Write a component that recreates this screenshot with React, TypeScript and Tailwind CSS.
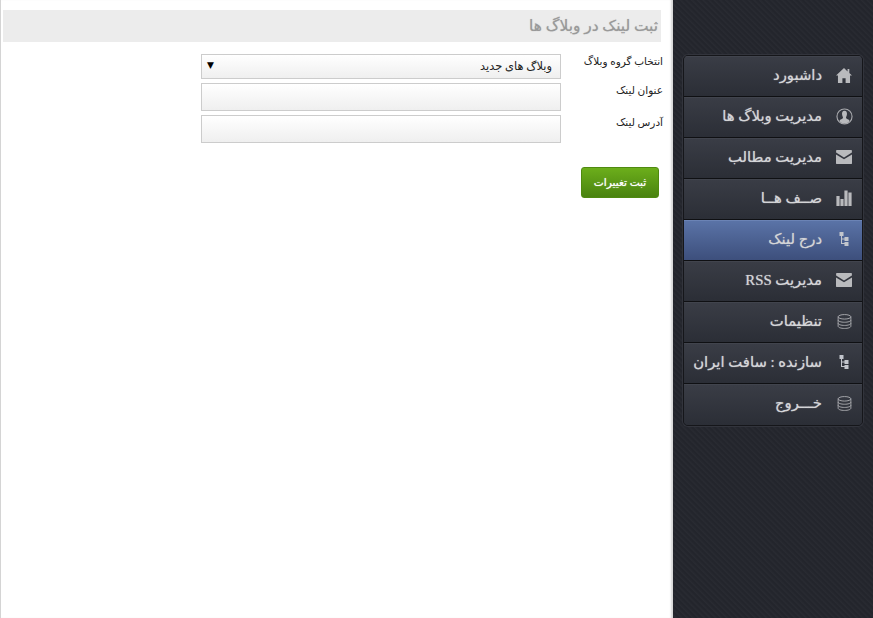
import React from "react";

const HomeIcon = () => (
  <svg width="16" height="15" viewBox="0 0 18 16" fill="#b9babd" preserveAspectRatio="none">
    <path d="M9 0 L13 3.6 V1 H15 V5.4 L18 8 H15.8 V16 H10.8 V11 H7.2 V16 H2.2 V8 H0 Z" />
  </svg>
);

const UserIcon = () => (
  <svg width="17" height="17" viewBox="0 0 18 18">
    <circle cx="9" cy="9" r="8" fill="none" stroke="#a9aaae" strokeWidth="1.2" />
    <path
      d="M9 2.8 C11 2.8 11.8 4.4 11.6 6.6 C11.5 8 11 9 10.6 9.8 C10.5 11 11.4 11.6 14 12.8 L14.2 14 C13 15.6 11 16.4 9 16.4 C7 16.4 5 15.6 3.8 14 L4 12.8 C6.6 11.6 7.5 11 7.4 9.8 C7 9 6.5 8 6.4 6.6 C6.2 4.4 7 2.8 9 2.8 Z"
      fill="#b9babd"
    />
  </svg>
);

const MailIcon = () => (
  <svg width="16" height="14" viewBox="0 0 17 14" fill="#b9babd" preserveAspectRatio="none">
    <path d="M0.5 0 H16.5 L16.9 0.5 V2.6 L8.5 7.4 L0.1 2.6 V0.5 Z" />
    <path d="M0 4.4 L8.5 9.2 L17 4.4 V13.4 L16.5 14 H0.5 L0 13.4 Z" />
  </svg>
);

const BarsIcon = () => (
  <svg width="16" height="16" viewBox="0 0 16 16" fill="#b9babd">
    <rect x="0.4" y="6" width="3.2" height="10" />
    <rect x="4.4" y="9" width="3.2" height="7" />
    <rect x="8.4" y="0.5" width="3.2" height="15.5" />
    <rect x="12.4" y="2.5" width="3.2" height="13.5" />
  </svg>
);

const TreeIcon = () => (
  <svg width="10" height="14" viewBox="0 0 10 14" fill="#c2c5cc">
    <rect x="0.5" y="0" width="4" height="4" />
    <rect x="2" y="4" width="1" height="8" />
    <rect x="2" y="6.5" width="4" height="1" />
    <rect x="2" y="11" width="4" height="1" />
    <rect x="5.5" y="5" width="4" height="4" />
    <rect x="5.5" y="10" width="4" height="4" />
  </svg>
);

const DbIcon = () => (
  <svg width="15" height="15" viewBox="0 0 16 16" fill="none" stroke="#a9aaae" strokeWidth="1">
    <ellipse cx="8" cy="3" rx="6.8" ry="2.4" />
    <path d="M1.2 3 V13 C1.2 14.4 4.2 15.4 8 15.4 C11.8 15.4 14.8 14.4 14.8 13 V3" />
    <path d="M1.2 6.4 C1.2 7.8 4.2 8.8 8 8.8 C11.8 8.8 14.8 7.8 14.8 6.4" />
    <path d="M1.2 9.8 C1.2 11.2 4.2 12.2 8 12.2 C11.8 12.2 14.8 11.2 14.8 9.8" />
  </svg>
);

const menu = [
  { label: "داشبورد", icon: <HomeIcon /> },
  { label: "مدیریت وبلاگ ها", icon: <UserIcon /> },
  { label: "مدیریت مطالب", icon: <MailIcon /> },
  { label: "صــف هــا", icon: <BarsIcon /> },
  { label: "درج لینک", icon: <TreeIcon />, active: true },
  { label: "مدیریت RSS", icon: <MailIcon /> },
  { label: "تنظیمات", icon: <DbIcon /> },
  { label: "سازنده : سافت ایران", icon: <TreeIcon /> },
  { label: "خـــروج", icon: <DbIcon /> },
];

const fieldClass =
  "block w-[360px] border border-[#cccccc] bg-gradient-to-b from-white to-[#efefef] outline-none";

export default function App() {
  return (
    <div
      dir="rtl"
      className="flex h-[618px] w-[873px] overflow-hidden bg-white font-['Liberation_Serif','DejaVu_Sans',sans-serif]"
    >
      {/* Sidebar */}
      <aside className="h-full w-[200px] shrink-0 bg-[#24262e] bg-[repeating-linear-gradient(45deg,#23252c_0px,#23252c_1px,#292b32_2px,#23252c_4px)] pt-[55px] pr-[10px] pl-[10px]">
        <nav className="overflow-hidden rounded-[5px] border border-[#15161a] shadow-[0_0_0_1px_#32343c]">
          {menu.map((item, i) => (
            <a
              key={i}
              className={
                "flex h-[41px] items-center border-b border-[#0f1013] pb-[2px] last:border-b-0 " +
                (item.active
                  ? "bg-gradient-to-b from-[#5b74a8] to-[#3d4f7c] shadow-[inset_0_1px_0_#6b83b5]"
                  : "bg-gradient-to-b from-[#3a3d46] to-[#2b2e36] shadow-[inset_0_1px_0_#41444d]")
              }
            >
              <span className="flex w-[40px] shrink-0 items-center justify-center pl-[4px]">{item.icon}</span>
              <span className="text-[14.8px] whitespace-nowrap text-[#d4d5d8] [text-shadow:0_0_1px_#b0b1b5]">{item.label}</span>
            </a>
          ))}
        </nav>
      </aside>

      {/* Main */}
      <main className="h-full w-[673px] shrink-0 border-l border-[#d4d4d4] pt-[10px] pr-[12px] pl-[2px] shadow-[inset_-3px_0_2px_-1px_rgba(0,0,0,0.16)]">
        <h1 className="flex h-[32px] items-center bg-[#ececec] pr-[3px] text-[15.4px] font-normal text-[#999999] [text-shadow:0_0_1px_#b0b0b0]">
          ثبت لینک در وبلاگ ها
        </h1>

        <form className="mt-[12px] -mr-[2px] flex flex-col gap-[4px] text-[10.5px] text-[#222222]">
          <div className="flex">
            <label className="w-[102px]">انتخاب گروه وبلاگ</label>
            <div className="relative">
              <select className={fieldClass + " h-[25px] appearance-none pr-[8px] text-[11.4px] text-[#222222]"}>
                <option>وبلاگ های جدید</option>
              </select>
              <span className="pointer-events-none absolute top-[5px] left-[6px] font-['DejaVu_Sans'] text-[9px] text-black">▼</span>
            </div>
          </div>
          <div className="flex">
            <label className="w-[102px]">عنوان لینک</label>
            <input className={fieldClass + " h-[28px]"} />
          </div>
          <div className="flex">
            <label className="w-[102px]">آدرس لینک</label>
            <input className={fieldClass + " h-[28px]"} />
          </div>
          <div className="mt-[20px] pr-[4px]">
            <button
              type="button"
              className="h-[31px] w-[78px] rounded-[3px] border border-[#4f8a10] bg-gradient-to-b from-[#6cae1b] to-[#4a8310] text-[10.6px] font-normal text-white [text-shadow:0_0_1px_#e8f0e0]"
            >
              ثبت تغییرات
            </button>
          </div>
        </form>
      </main>
    </div>
  );
}
